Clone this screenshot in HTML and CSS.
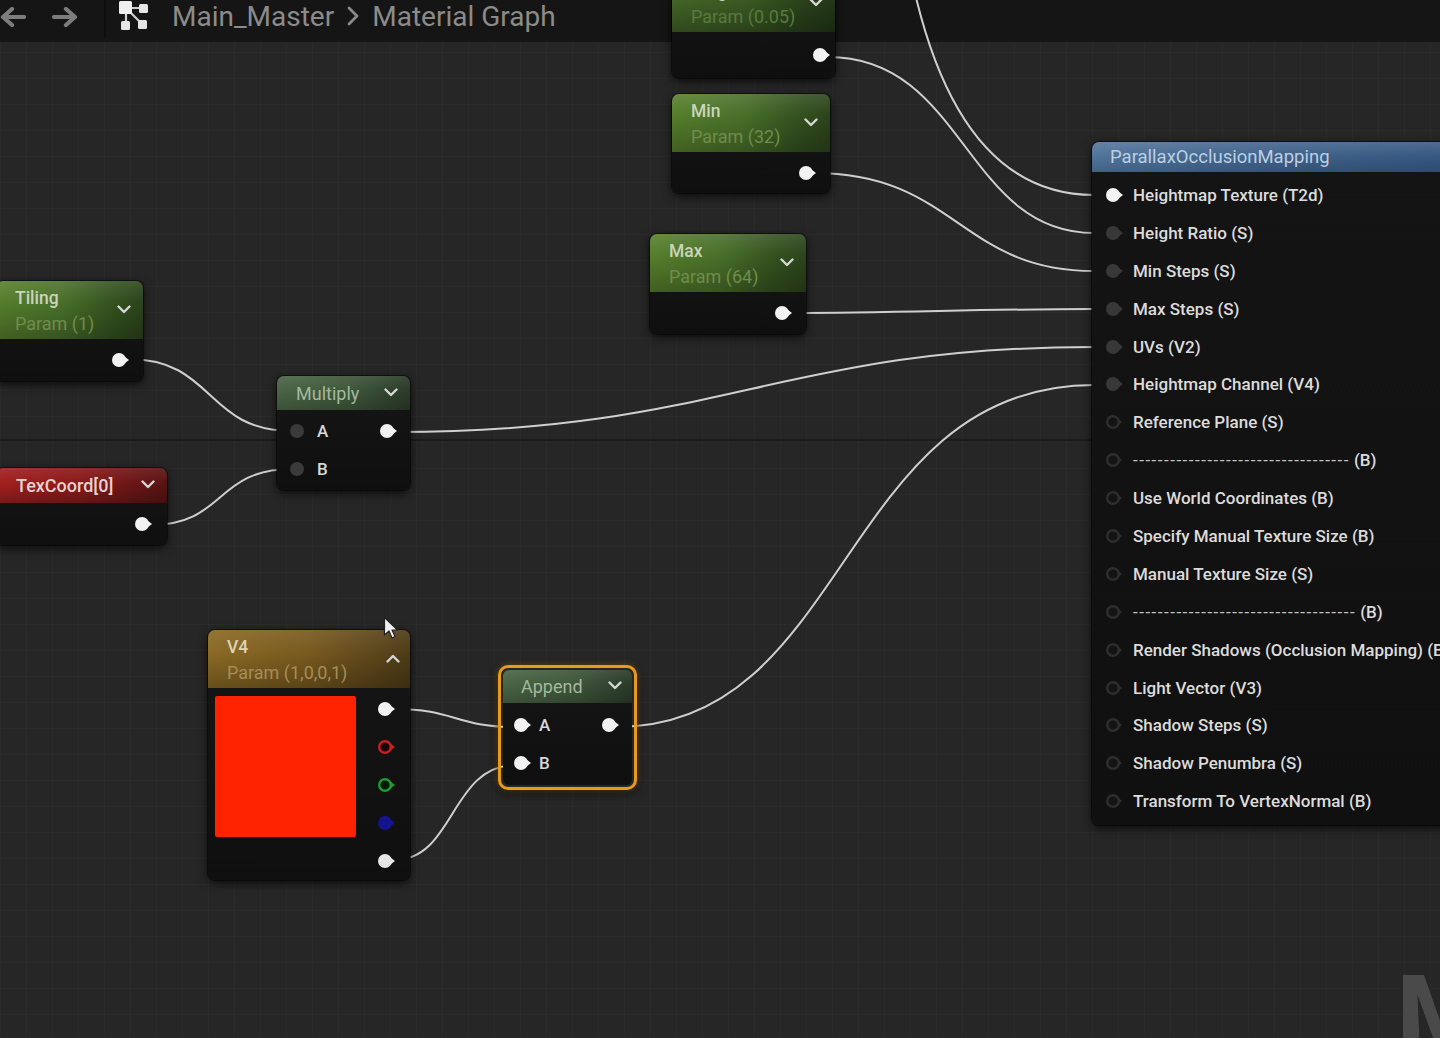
FILE: index.html
```html
<!DOCTYPE html>
<html>
<head>
<meta charset="utf-8">
<link rel="stylesheet" href="styles.css">
</head>
<body>
<div class="editor">
  <div class="grid-major-h"></div>

  <div class="topbar">
    <div class="nav">
      <svg width="28" height="22" viewBox="0 0 28 22"><path d="M26 11 H8 M14 3 L5 11 L14 19" fill="none" stroke="#7d7d7d" stroke-width="4.2" stroke-linecap="round" stroke-linejoin="round"/></svg>
      <svg width="28" height="22" viewBox="0 0 28 22"><path d="M2 11 H20 M14 3 L23 11 L14 19" fill="none" stroke="#7d7d7d" stroke-width="4.2" stroke-linecap="round" stroke-linejoin="round"/></svg>
    </div>
    <div class="crumbs">
      <svg width="34" height="32" viewBox="0 0 34 32">
        <g stroke="#cfcfcf" stroke-width="2.2">
          <path d="M8 8 L25 8 M8 8 L8 25 M8 8 L24 24"/>
        </g>
        <rect x="1" y="1" width="13" height="13" rx="1.5" fill="#efefef"/>
        <rect x="21" y="4" width="9" height="9" rx="1.5" fill="#e6e6e6"/>
        <rect x="3" y="21" width="9" height="9" rx="1.5" fill="#e6e6e6"/>
        <rect x="20" y="20" width="9" height="9" rx="1.5" fill="#e6e6e6"/>
      </svg>
      <span class="crumb">Main_Master</span>
      <svg width="14" height="22" viewBox="0 0 14 22"><path d="M3 3 L11 11 L3 19" fill="none" stroke="#8a8a8a" stroke-width="2.8" stroke-linecap="round" stroke-linejoin="round"/></svg>
      <span class="crumb">Material Graph</span>
    </div>
  </div>

  <svg class="wires" width="1440" height="1038" viewBox="0 0 1440 1038">
    <g fill="none" stroke="#cfcfcf" stroke-width="2">
      <path d="M912,-20 C940,110 995,195 1094,195"/>
      <path d="M828,57 C965,57 965,233 1094,233"/>
      <path d="M814,173 C955,173 960,271 1094,271"/>
      <path d="M791,313 C900,313 980,309 1094,309"/>
      <path d="M396,432 C720,432 780,347 1094,347"/>
      <path d="M617,727 C850,727 840,385 1094,385"/>
      <path d="M128,359 C215,359 205,431 292,431"/>
      <path d="M151,525 C225,525 215,469 292,469"/>
      <path d="M394,709 C455,709 455,727 516,727"/>
      <path d="M394,860 C455,860 450,765 516,765"/>
    </g>
  </svg>

  <!-- top partial param node -->
  <div class="node param n-top">
    <div class="hdr hdr-green hdr-param">
      <div class="titles"><span class="title">Height</span><span class="sub">Param (0.05)</span></div>
      <svg class="chev" width="14" height="9" viewBox="0 0 14 9"><path d="M1.5 1.5 L7 7 L12.5 1.5" fill="none" stroke="#d6d6d6" stroke-width="2.4" stroke-linecap="round" stroke-linejoin="round"/></svg>
    </div>
    <div class="out-row"><svg class="pin" width="20" height="16" viewBox="0 0 20 16"><circle cx="8" cy="8" r="7" fill="#f2f2f2"/><path d="M13.5 4.5 L18 8 L13.5 11.5z" fill="#f2f2f2"/></svg></div>
  </div>

  <!-- Min -->
  <div class="node param n-min">
    <div class="hdr hdr-green hdr-param">
      <div class="titles"><span class="title">Min</span><span class="sub">Param (32)</span></div>
      <svg class="chev" width="14" height="9" viewBox="0 0 14 9"><path d="M1.5 1.5 L7 7 L12.5 1.5" fill="none" stroke="#d6d6d6" stroke-width="2.4" stroke-linecap="round" stroke-linejoin="round"/></svg>
    </div>
    <div class="out-row"><svg class="pin" width="20" height="16" viewBox="0 0 20 16"><circle cx="8" cy="8" r="7" fill="#f2f2f2"/><path d="M13.5 4.5 L18 8 L13.5 11.5z" fill="#f2f2f2"/></svg></div>
  </div>

  <!-- Max -->
  <div class="node param n-max">
    <div class="hdr hdr-green hdr-param">
      <div class="titles"><span class="title">Max</span><span class="sub">Param (64)</span></div>
      <svg class="chev" width="14" height="9" viewBox="0 0 14 9"><path d="M1.5 1.5 L7 7 L12.5 1.5" fill="none" stroke="#d6d6d6" stroke-width="2.4" stroke-linecap="round" stroke-linejoin="round"/></svg>
    </div>
    <div class="out-row"><svg class="pin" width="20" height="16" viewBox="0 0 20 16"><circle cx="8" cy="8" r="7" fill="#f2f2f2"/><path d="M13.5 4.5 L18 8 L13.5 11.5z" fill="#f2f2f2"/></svg></div>
  </div>

  <!-- Tiling -->
  <div class="node param n-tiling">
    <div class="hdr hdr-green hdr-param">
      <div class="titles"><span class="title">Tiling</span><span class="sub">Param (1)</span></div>
      <svg class="chev" width="14" height="9" viewBox="0 0 14 9"><path d="M1.5 1.5 L7 7 L12.5 1.5" fill="none" stroke="#d6d6d6" stroke-width="2.4" stroke-linecap="round" stroke-linejoin="round"/></svg>
    </div>
    <div class="out-row"><svg class="pin" width="20" height="16" viewBox="0 0 20 16"><circle cx="8" cy="8" r="7" fill="#f2f2f2"/><path d="M13.5 4.5 L18 8 L13.5 11.5z" fill="#f2f2f2"/></svg></div>
  </div>

  <!-- TexCoord -->
  <div class="node n-texcoord">
    <div class="hdr hdr-red hdr-small">
      <span class="title-small red-t">TexCoord[0]</span>
      <svg class="chev" width="14" height="9" viewBox="0 0 14 9"><path d="M1.5 1.5 L7 7 L12.5 1.5" fill="none" stroke="#d6d6d6" stroke-width="2.4" stroke-linecap="round" stroke-linejoin="round"/></svg>
    </div>
    <div class="out-row tall"><svg class="pin" width="20" height="16" viewBox="0 0 20 16"><circle cx="8" cy="8" r="7" fill="#f2f2f2"/><path d="M13.5 4.5 L18 8 L13.5 11.5z" fill="#f2f2f2"/></svg></div>
  </div>

  <!-- Multiply -->
  <div class="node n-multiply">
    <div class="hdr hdr-dull hdr-small">
      <span class="title-small dull-t">Multiply</span>
      <svg class="chev" width="14" height="9" viewBox="0 0 14 9"><path d="M1.5 1.5 L7 7 L12.5 1.5" fill="none" stroke="#d6d6d6" stroke-width="2.4" stroke-linecap="round" stroke-linejoin="round"/></svg>
    </div>
    <div class="io">
      <div class="io-row">
        <div class="in"><svg class="pin" width="20" height="16" viewBox="0 0 20 16"><circle cx="8" cy="8" r="7" fill="#3a3a3a"/></svg><span class="lbl">A</span></div>
        <svg class="pin" width="20" height="16" viewBox="0 0 20 16"><circle cx="8" cy="8" r="7" fill="#f2f2f2"/><path d="M13.5 4.5 L18 8 L13.5 11.5z" fill="#f2f2f2"/></svg>
      </div>
      <div class="io-row">
        <div class="in"><svg class="pin" width="20" height="16" viewBox="0 0 20 16"><circle cx="8" cy="8" r="7" fill="#3a3a3a"/></svg><span class="lbl">B</span></div>
      </div>
    </div>
  </div>

  <!-- V4 -->
  <div class="node n-v4">
    <div class="hdr hdr-gold hdr-param">
      <div class="titles"><span class="title gold-t">V4</span><span class="sub gold-s">Param (1,0,0,1)</span></div>
      <svg class="chev" width="14" height="9" viewBox="0 0 14 9"><path d="M1.5 7.5 L7 2 L12.5 7.5" fill="none" stroke="#d6d6d6" stroke-width="2.4" stroke-linecap="round" stroke-linejoin="round"/></svg>
    </div>
    <div class="v4-body">
      <div class="swatch"></div>
      <div class="v4-pins">
        <svg class="pin" width="20" height="16" viewBox="0 0 20 16"><circle cx="8" cy="8" r="7" fill="#f2f2f2"/><path d="M13.5 4.5 L18 8 L13.5 11.5z" fill="#f2f2f2"/></svg>
        <svg class="pin" width="20" height="16" viewBox="0 0 20 16"><circle cx="8" cy="8" r="5.8" fill="#1a0606" stroke="#c82020" stroke-width="2.4"/><path d="M13.5 4.5 L18 8 L13.5 11.5z" fill="#c82020"/></svg>
        <svg class="pin" width="20" height="16" viewBox="0 0 20 16"><circle cx="8" cy="8" r="5.8" fill="#061a08" stroke="#1e9a2e" stroke-width="2.4"/><path d="M13.5 4.5 L18 8 L13.5 11.5z" fill="#1e9a2e"/></svg>
        <svg class="pin" width="20" height="16" viewBox="0 0 20 16"><circle cx="8" cy="8" r="7" fill="#14148e"/><path d="M13.5 4.5 L18 8 L13.5 11.5z" fill="#14148e"/></svg>
        <svg class="pin" width="20" height="16" viewBox="0 0 20 16"><circle cx="8" cy="8" r="7" fill="#e6e6e6"/><path d="M13.5 4.5 L18 8 L13.5 11.5z" fill="#e6e6e6"/></svg>
      </div>
    </div>
  </div>

  <!-- Append -->
  <div class="selected n-append">
    <div class="node-inner">
      <div class="hdr hdr-dull hdr-small">
        <span class="title-small dull-t">Append</span>
        <svg class="chev" width="14" height="9" viewBox="0 0 14 9"><path d="M1.5 1.5 L7 7 L12.5 1.5" fill="none" stroke="#d6d6d6" stroke-width="2.4" stroke-linecap="round" stroke-linejoin="round"/></svg>
      </div>
      <div class="io">
        <div class="io-row">
          <div class="in"><svg class="pin" width="20" height="16" viewBox="0 0 20 16"><circle cx="8" cy="8" r="7" fill="#f2f2f2"/><path d="M13.5 4.5 L18 8 L13.5 11.5z" fill="#f2f2f2"/></svg><span class="lbl">A</span></div>
          <svg class="pin" width="20" height="16" viewBox="0 0 20 16"><circle cx="8" cy="8" r="7" fill="#f2f2f2"/><path d="M13.5 4.5 L18 8 L13.5 11.5z" fill="#f2f2f2"/></svg>
        </div>
        <div class="io-row">
          <div class="in"><svg class="pin" width="20" height="16" viewBox="0 0 20 16"><circle cx="8" cy="8" r="7" fill="#f2f2f2"/><path d="M13.5 4.5 L18 8 L13.5 11.5z" fill="#f2f2f2"/></svg><span class="lbl">B</span></div>
        </div>
      </div>
    </div>
  </div>

  <!-- Parallax Occlusion Mapping -->
  <div class="node n-pom">
    <div class="hdr hdr-blue"><span class="pom-title">ParallaxOcclusionMapping</span></div>
    <div class="pom-rows">
      <div class="pom-row"><svg class="pin" width="20" height="16" viewBox="0 0 20 16"><circle cx="8" cy="8" r="7" fill="#f4f4f4"/><path d="M13.5 4.5 L18 8 L13.5 11.5z" fill="#f4f4f4"/></svg><span>Heightmap Texture (T2d)</span></div>
      <div class="pom-row"><svg class="pin" width="20" height="16" viewBox="0 0 20 16"><circle cx="8" cy="8" r="7" fill="#383838"/><path d="M13.5 4.5 L18 8 L13.5 11.5z" fill="#383838"/></svg><span>Height Ratio (S)</span></div>
      <div class="pom-row"><svg class="pin" width="20" height="16" viewBox="0 0 20 16"><circle cx="8" cy="8" r="7" fill="#383838"/><path d="M13.5 4.5 L18 8 L13.5 11.5z" fill="#383838"/></svg><span>Min Steps (S)</span></div>
      <div class="pom-row"><svg class="pin" width="20" height="16" viewBox="0 0 20 16"><circle cx="8" cy="8" r="7" fill="#383838"/><path d="M13.5 4.5 L18 8 L13.5 11.5z" fill="#383838"/></svg><span>Max Steps (S)</span></div>
      <div class="pom-row"><svg class="pin" width="20" height="16" viewBox="0 0 20 16"><circle cx="8" cy="8" r="7" fill="#383838"/><path d="M13.5 4.5 L18 8 L13.5 11.5z" fill="#383838"/></svg><span>UVs (V2)</span></div>
      <div class="pom-row"><svg class="pin" width="20" height="16" viewBox="0 0 20 16"><circle cx="8" cy="8" r="7" fill="#383838"/><path d="M13.5 4.5 L18 8 L13.5 11.5z" fill="#383838"/></svg><span>Heightmap Channel (V4)</span></div>
      <div class="pom-row"><svg class="pin" width="20" height="16" viewBox="0 0 20 16"><circle cx="8" cy="8" r="5.8" fill="#141414" stroke="#2e2e2e" stroke-width="2.4"/><path d="M13.5 5 L17 8 L13.5 11z" fill="#2e2e2e"/></svg><span>Reference Plane (S)</span></div>
      <div class="pom-row"><svg class="pin" width="20" height="16" viewBox="0 0 20 16"><circle cx="8" cy="8" r="5.8" fill="#141414" stroke="#2e2e2e" stroke-width="2.4"/><path d="M13.5 5 L17 8 L13.5 11z" fill="#2e2e2e"/></svg><span class="dash">-----------------------------------</span><span class="dash-b">(B)</span></div>
      <div class="pom-row"><svg class="pin" width="20" height="16" viewBox="0 0 20 16"><circle cx="8" cy="8" r="5.8" fill="#141414" stroke="#2e2e2e" stroke-width="2.4"/><path d="M13.5 5 L17 8 L13.5 11z" fill="#2e2e2e"/></svg><span>Use World Coordinates (B)</span></div>
      <div class="pom-row"><svg class="pin" width="20" height="16" viewBox="0 0 20 16"><circle cx="8" cy="8" r="5.8" fill="#141414" stroke="#2e2e2e" stroke-width="2.4"/><path d="M13.5 5 L17 8 L13.5 11z" fill="#2e2e2e"/></svg><span>Specify Manual Texture Size (B)</span></div>
      <div class="pom-row"><svg class="pin" width="20" height="16" viewBox="0 0 20 16"><circle cx="8" cy="8" r="5.8" fill="#141414" stroke="#2e2e2e" stroke-width="2.4"/><path d="M13.5 5 L17 8 L13.5 11z" fill="#2e2e2e"/></svg><span>Manual Texture Size (S)</span></div>
      <div class="pom-row"><svg class="pin" width="20" height="16" viewBox="0 0 20 16"><circle cx="8" cy="8" r="5.8" fill="#141414" stroke="#2e2e2e" stroke-width="2.4"/><path d="M13.5 5 L17 8 L13.5 11z" fill="#2e2e2e"/></svg><span class="dash">------------------------------------</span><span class="dash-b">(B)</span></div>
      <div class="pom-row"><svg class="pin" width="20" height="16" viewBox="0 0 20 16"><circle cx="8" cy="8" r="5.8" fill="#141414" stroke="#2e2e2e" stroke-width="2.4"/><path d="M13.5 5 L17 8 L13.5 11z" fill="#2e2e2e"/></svg><span>Render Shadows (Occlusion Mapping) (B)</span></div>
      <div class="pom-row"><svg class="pin" width="20" height="16" viewBox="0 0 20 16"><circle cx="8" cy="8" r="5.8" fill="#141414" stroke="#2e2e2e" stroke-width="2.4"/><path d="M13.5 5 L17 8 L13.5 11z" fill="#2e2e2e"/></svg><span>Light Vector (V3)</span></div>
      <div class="pom-row"><svg class="pin" width="20" height="16" viewBox="0 0 20 16"><circle cx="8" cy="8" r="5.8" fill="#141414" stroke="#2e2e2e" stroke-width="2.4"/><path d="M13.5 5 L17 8 L13.5 11z" fill="#2e2e2e"/></svg><span>Shadow Steps (S)</span></div>
      <div class="pom-row"><svg class="pin" width="20" height="16" viewBox="0 0 20 16"><circle cx="8" cy="8" r="5.8" fill="#141414" stroke="#2e2e2e" stroke-width="2.4"/><path d="M13.5 5 L17 8 L13.5 11z" fill="#2e2e2e"/></svg><span>Shadow Penumbra (S)</span></div>
      <div class="pom-row"><svg class="pin" width="20" height="16" viewBox="0 0 20 16"><circle cx="8" cy="8" r="5.8" fill="#141414" stroke="#2e2e2e" stroke-width="2.4"/><path d="M13.5 5 L17 8 L13.5 11z" fill="#2e2e2e"/></svg><span>Transform To VertexNormal (B)</span></div>
    </div>
  </div>

  <div class="watermark">MATERIAL</div>

  <svg class="cursor" width="16" height="24" viewBox="0 0 16 24">
    <path d="M1.5 1.5 L1.5 19 L6 15 L9 22 L12 20.5 L9 14 L14.5 14 Z" fill="#f0f0f0" stroke="#222" stroke-width="1.2" stroke-linejoin="round"/>
  </svg>
</div>
</body>
</html>
```

FILE: styles.css
```css
* { box-sizing: border-box; }
html, body { margin: 0; padding: 0; }
body {
  background: #1a1a1a;
  font-family: Roboto, "Liberation Sans", sans-serif;
  overflow: hidden;
}
.editor {
  position: relative;
  width: 1440px;
  height: 1038px;
  overflow: hidden;
  background-color: #262626;
  background-image:
    linear-gradient(rgba(255,255,255,0.018) 1px, transparent 1px),
    linear-gradient(90deg, rgba(255,255,255,0.018) 1px, transparent 1px);
  background-size: 26px 26px;
}
.grid-major-h {
  position: absolute;
  left: 0; right: 0;
  top: 439px;
  height: 2px;
  background: #1c1c1c;
}
.wires {
  position: absolute;
  left: 0; top: 0;
}

/* top bar (drawn beneath the graph content) */
.topbar {
  position: absolute;
  left: 0; top: 0;
  width: 1440px;
  height: 42px;
  background: #151515;
  display: flex;
  align-items: center;
}
.nav {
  display: flex;
  align-items: center;
  gap: 26px;
  width: 106px;
  height: 100%;
  border-right: 2px solid #0e0e0e;
  margin-top: -8px;
}
.nav svg:first-child { margin-left: -2px; }
.crumbs {
  display: flex;
  align-items: center;
  gap: 12px;
  padding-left: 12px;
  margin-top: -10px;
}
.crumbs > svg:first-child { margin-right: 8px; }
.crumb {
  font-family: Roboto, "Liberation Sans", sans-serif;
  font-size: 28px;
  color: #8b8b8b;
}

/* nodes */
.node {
  position: absolute;
  background: linear-gradient(#161616, #0f0f0f);
  border-radius: 7px;
  box-shadow: 0 3px 10px rgba(0,0,0,0.75), 0 0 0 1px rgba(0,0,0,0.5);
  overflow: hidden;
}
.hdr {
  display: flex;
  align-items: center;
  justify-content: space-between;
}
.hdr-param {
  height: 58px;
  padding: 0 12px 0 19px;
}
.hdr-small {
  height: 34px;
  padding: 0 12px 0 19px;
}
.titles {
  display: flex;
  flex-direction: column;
  line-height: 25px;
  padding-top: 1px;
}
.title {
  font-size: 17.5px;
  color: #c9d4bd;
  font-weight: 500;
}
.sub {
  font-size: 18px;
  color: #6e8d4b;
}
.title-small {
  font-size: 18px;
}
.chev { flex: none; margin-top: -2px; }
.hdr-green {
  background:
    linear-gradient(rgba(255,255,255,0.10), rgba(255,255,255,0) 35%, rgba(0,0,0,0.25)),
    linear-gradient(90deg, #577f2c 0%, #49702a 45%, #34521f 80%, #2c441b 100%);
}
.hdr-red {
  background:
    linear-gradient(rgba(255,255,255,0.08), rgba(255,255,255,0) 40%, rgba(0,0,0,0.25)),
    linear-gradient(90deg, #a52020 0%, #8a1a1a 50%, #5a1414 100%);
}
.red-t { color: #e6d2d2; font-weight: 500; }
.hdr-dull {
  background:
    linear-gradient(rgba(255,255,255,0.08), rgba(255,255,255,0) 40%, rgba(0,0,0,0.2)),
    linear-gradient(90deg, #4b6546 0%, #3f573b 55%, #2b3b29 100%);
}
.dull-t { color: #a4b89e; }
.hdr-gold {
  background:
    linear-gradient(rgba(255,255,255,0.08), rgba(255,255,255,0) 40%, rgba(0,0,0,0.25)),
    linear-gradient(90deg, #8a6a24 0%, #785a1f 50%, #4e3c18 100%);
}
.gold-t { color: #ddd3b4; }
.gold-s { color: #a68d55; }
.hdr-blue {
  height: 30px;
  padding-left: 18px;
  background:
    linear-gradient(rgba(255,255,255,0.12), rgba(255,255,255,0) 50%, rgba(0,0,0,0.15)),
    linear-gradient(90deg, #4f739a 0%, #3f6189 50%, #355680 100%);
  justify-content: flex-start;
}
.pom-title {
  font-size: 18.5px;
  color: #bccfe2;
}

.out-row {
  height: 43px;
  display: flex;
  align-items: center;
  justify-content: flex-end;
  padding-right: 7px;
}
.out-row.tall { height: 42px; }
.pin { flex: none; display: block; }

.n-top { left: 672px; top: -26px; width: 163px; }
.n-top .hdr-green {
  background:
    linear-gradient(rgba(255,255,255,0.04), rgba(255,255,255,0) 35%, rgba(0,0,0,0.3)),
    linear-gradient(90deg, #46682a 0%, #3d5e24 45%, #2c451c 80%, #253a18 100%);
}
.n-top .sub { color: #587a3c; }
.n-top .out-row { height: 46px; padding-right: 3px; }
.n-min { left: 672px; top: 94px; width: 158px; }
.n-min .out-row { height: 41px; padding-right: 12px; }
.n-max { left: 650px; top: 234px; width: 156px; }
.n-max .out-row { height: 42px; padding-right: 12px; }
.n-tiling { left: -4px; top: 281px; width: 147px; }
.n-tiling .out-row { height: 42px; padding-right: 12px; }
.n-texcoord { left: -4px; top: 468px; width: 171px; }
.n-texcoord .hdr-small { height: 35px; padding-left: 20px; }
.n-texcoord .out-row { padding-right: 13px; }

/* multiply / append io */
.io {
  display: flex;
  flex-direction: column;
  padding: 2px 0 2px;
}
.io-row {
  height: 38px;
  display: flex;
  align-items: center;
  justify-content: space-between;
}
.in {
  display: flex;
  align-items: center;
  gap: 8px;
}
.lbl {
  font-size: 17px;
  color: #d8d8d8;
  font-weight: 500;
}
.n-multiply { left: 277px; top: 376px; width: 133px; }
.n-multiply .io { padding: 2px 11px 2px 12px; }

.selected {
  position: absolute;
  border: 3px solid #e79a1e;
  border-radius: 10px;
  padding: 2px;
  box-shadow: 0 0 6px rgba(231,154,30,0.35), 0 3px 10px rgba(0,0,0,0.7);
}
.n-append { left: 498px; top: 665px; width: 139px; height: 125px; }
.node-inner {
  background: linear-gradient(#161616, #0f0f0f);
  border-radius: 6px;
  overflow: hidden;
  height: 100%;
}
.n-append .hdr-small { height: 33px; padding-left: 18px; padding-right: 10px; }
.n-append .io { padding: 3px 11px 2px 10px; }
.n-append .in { gap: 6px; }

/* V4 */
.n-v4 { left: 208px; top: 630px; width: 202px; height: 250px; }
.n-v4 .hdr-param { padding-right: 10px; }
.v4-body {
  display: flex;
  justify-content: space-between;
  padding: 8px 13px 0 7px;
}
.swatch {
  width: 141px;
  height: 141px;
  background: #ff2200;
  border-radius: 2px;
}
.v4-pins {
  display: flex;
  flex-direction: column;
  gap: 22px;
  padding-top: 5px;
}

/* Parallax node */
.n-pom {
  left: 1092px;
  top: 142px;
  width: 370px;
  height: 683px;
  border-radius: 7px 0 0 7px;
  background: linear-gradient(#141414, #101010);
}
.pom-rows {
  padding-top: 4px;
  display: flex;
  flex-direction: column;
}
.pom-row {
  height: 37.9px;
  display: flex;
  align-items: center;
  gap: 8px;
  padding-left: 13px;
  font-size: 17px;
  font-weight: 500;
  color: #dcdcdc;
  white-space: nowrap;
}
.dash {
  font-weight: 400;
  letter-spacing: 1.5px;
  color: #c4c4c4;
}
.dash-b { margin-left: -4px; }

.watermark {
  position: absolute;
  left: 1396px;
  top: 961px;
  font-family: Roboto, "Liberation Sans", sans-serif;
  font-weight: 700;
  font-size: 110px;
  line-height: 1;
  color: #4a4a4a;
  white-space: nowrap;
}
.cursor {
  position: absolute;
  left: 383px;
  top: 616px;
}
```
